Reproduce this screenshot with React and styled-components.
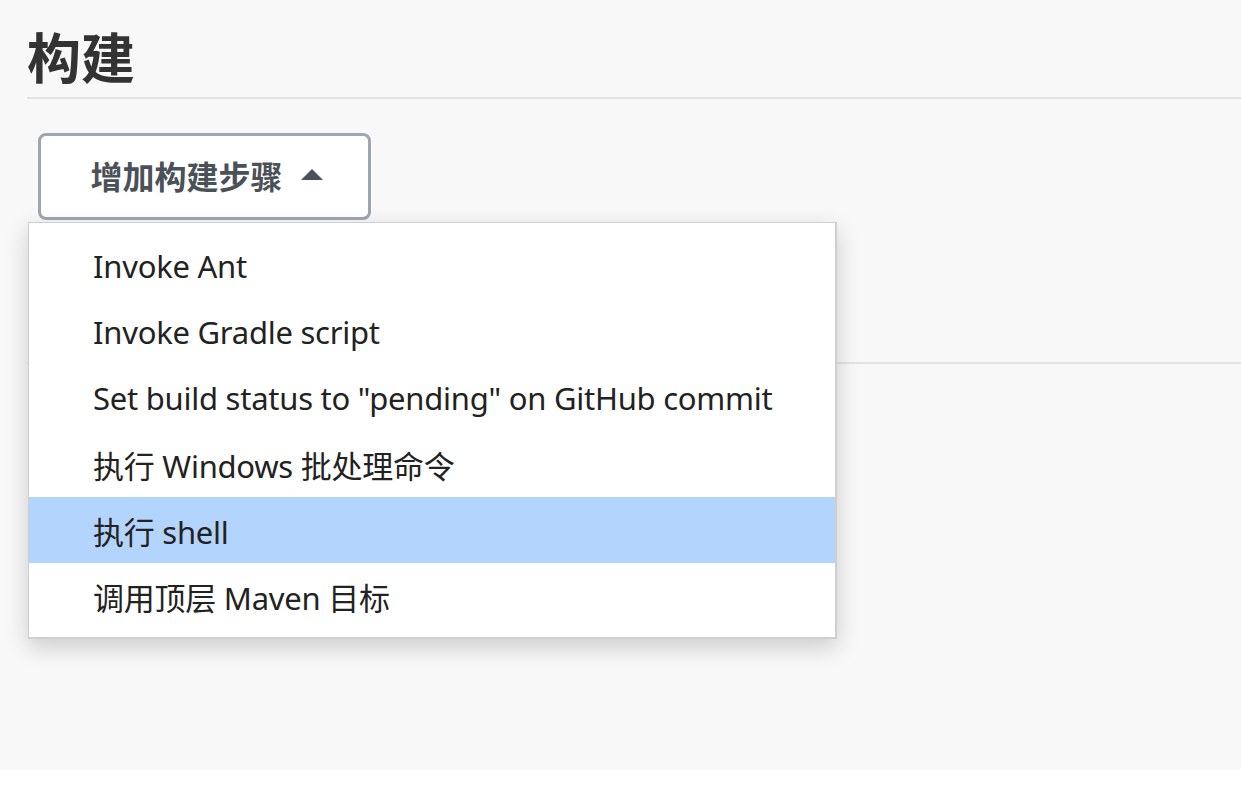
import React from "react";
import styled, { createGlobalStyle } from "styled-components";

const Global = createGlobalStyle`
  html, body { margin: 0; padding: 0; background: #ffffff; }
  body { font-family: "Noto Sans", "Noto Sans CJK SC", sans-serif; }
`;

const Page = styled.div`
  background: #f8f8f8;
  height: 770px;
  padding: 0 0 0 27px;
  box-sizing: border-box;
`;

const Title = styled.h1`
  margin: 0;
  padding-top: 24px;
  height: 99px;
  box-sizing: border-box;
  font-family: "Noto Sans CJK SC", sans-serif;
  font-size: 54px;
  font-weight: 700;
  line-height: 64px;
  color: #333333;
  border-bottom: 2px solid #e2e2e2;
`;

const Section = styled.div`
  position: relative;
  padding: 34px 0 0 11px;
`;

const Button = styled.button`
  display: flex;
  align-items: center;
  justify-content: center;
  gap: 16px;
  width: 333px;
  height: 87px;
  box-sizing: border-box;
  background: #ffffff;
  border: 3px solid #9ca7b1;
  border-radius: 8px;
  font-family: "Noto Sans CJK SC", sans-serif;
  font-size: 32px;
  font-weight: 700;
  color: #4b5158;
  padding: 0 0 4px 4px;
  cursor: pointer;
`;

const Caret = styled.span`
  width: 0;
  height: 0;
  border-left: 11px solid transparent;
  border-right: 11px solid transparent;
  border-bottom: 11px solid #4b5158;
  margin-left: 2px;
`;

const Divider = styled.div`
  margin-top: 142px;
  margin-left: -11px;
  border-top: 2px solid #e2e2e2;
`;

const Menu = styled.ul`
  position: absolute;
  left: 1px;
  top: 123px;
  width: 809px;
  margin: 0;
  padding: 10px 0 8px;
  list-style: none;
  background: #ffffff;
  border: 1px solid #cfcfcf;
  border-right-width: 2px;
  border-bottom-width: 2px;
  box-shadow: 0 8px 22px rgba(0, 0, 0, 0.18);
  box-sizing: border-box;
`;

const Item = styled.li`
  height: 66px;
  display: flex;
  align-items: center;
  padding-left: 64px;
  font-size: 31px;
  letter-spacing: -0.25px;
  color: #222222;
  background: ${(p) => (p.$active ? "#b3d4fc" : "transparent")};
  white-space: nowrap;
`;

const items = [
  "Invoke Ant",
  "Invoke Gradle script",
  'Set build status to "pending" on GitHub commit',
  "执行 Windows 批处理命令",
  "执行 shell",
  "调用顶层 Maven 目标",
];

export default function App() {
  return (
    <>
      <Global />
      <Page>
        <Title>构建</Title>
        <Section>
          <Button>
            增加构建步骤
            <Caret />
          </Button>
          <Divider />
          <Menu>
            {items.map((t, i) => (
              <Item key={t} $active={i === 4}>
                {t}
              </Item>
            ))}
          </Menu>
        </Section>
      </Page>
    </>
  );
}
